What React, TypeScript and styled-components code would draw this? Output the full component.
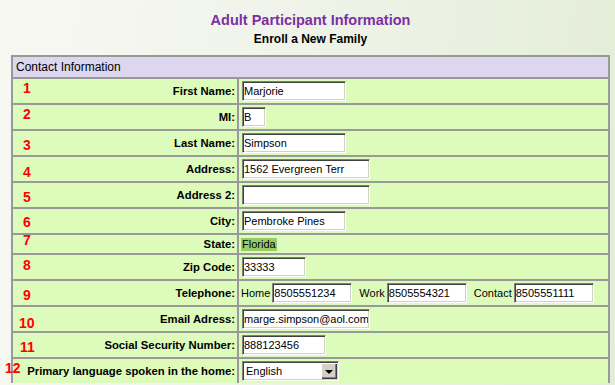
import React from 'react';
import styled, { createGlobalStyle } from 'styled-components';

const GlobalStyle = createGlobalStyle`
  html, body {
    margin: 0;
    padding: 0;
  }
  body {
    width: 615px;
    height: 385px;
    overflow: hidden;
    background: linear-gradient(100deg, #f8f8f3 0%, #f0f4ea 40%, #e3edd6 100%);
    font-family: "Liberation Sans", Arial, sans-serif;
  }
`;

const Page = styled.div`
  width: 599px;
  margin-left: 11px;
  padding-top: 11px;
`;

const Heading = styled.div`
  display: flex;
  flex-direction: column;
  align-items: center;
  margin-bottom: 9px;
`;

const Title = styled.div`
  font-size: 14.5px;
  line-height: 18px;
  font-weight: bold;
  color: #7b2fa5;
`;

const Subtitle = styled.div`
  margin-top: 3px;
  font-size: 12px;
  line-height: 14px;
  font-weight: bold;
  color: #000;
`;

const Table = styled.div`
  border: 2px solid #999;
  border-bottom: none;
`;

const HeaderRow = styled.div`
  height: 20px;
  line-height: 20px;
  padding-left: 3px;
  background: #dcd6ee;
  font-size: 12px;
  color: #000;
`;

const Row = styled.div<{ $h: number }>`
  position: relative;
  display: grid;
  grid-template-columns: 226px 1fr;
  height: ${(p) => p.$h}px;
  border-top: 2px solid #999;
  background: #ddfbbb;
`;

const LabelCell = styled.div`
  display: flex;
  align-items: center;
  justify-content: flex-end;
  padding-right: 2px;
  border-right: 2px solid #999;
  font-size: 11.3px;
  font-weight: bold;
  color: #000;
  white-space: nowrap;
`;

const ValueCell = styled.div`
  display: flex;
  align-items: center;
  padding-left: 2px;
  font-size: 11px;
  color: #000;
`;

const Num = styled.span<{ $top: number; $left: number }>`
  position: absolute;
  top: ${(p) => p.$top}px;
  left: ${(p) => p.$left}px;
  font-size: 14px;
  line-height: 14px;
  font-weight: bold;
  color: #f00;
`;

const TextInput = styled.input<{ $w: number }>`
  box-sizing: border-box;
  width: ${(p) => p.$w}px;
  height: 20px;
  margin: 0 0 0 1px;
  padding: 0 1px;
  border: 1px solid;
  border-color: #808080 #fff #fff #808080;
  box-shadow: inset 1px 1px 0 #404040, inset -1px -1px 0 #d4d0c8;
  background: #fff;
  font-family: "Liberation Sans", Arial, sans-serif;
  font-size: 11px;
  color: #000;
  outline: none;
`;

const InlineLabel = styled.span<{ $gap: number }>`
  margin-left: ${(p) => p.$gap}px;
  margin-right: 1px;
  font-size: 11px;
`;

const StateValue = styled.span`
  padding: 0 1px;
  line-height: 13px;
  background: #99cc66;
  font-size: 11px;
`;

const SelectBox = styled.div`
  box-sizing: border-box;
  display: flex;
  align-items: center;
  width: 97px;
  height: 20px;
  margin-left: 1px;
  border: 1px solid;
  border-color: #808080 #fff #fff #808080;
  box-shadow: inset 1px 1px 0 #404040, inset -1px -1px 0 #d4d0c8;
  background: #fff;
`;

const NativeSelect = styled.select`
  flex: 1;
  min-width: 0;
  height: 16px;
  margin: 0 0 0 1px;
  padding: 0 0 0 2px;
  border: none;
  appearance: none;
  background: transparent;
  font-family: "Liberation Sans", Arial, sans-serif;
  font-size: 11px;
  color: #000;
  outline: none;
`;

const ArrowButton = styled.span`
  display: flex;
  align-items: center;
  justify-content: center;
  width: 16px;
  height: 16px;
  margin-right: 1px;
  background: #d4d0c8;
  box-shadow: inset 1px 1px 0 #fff, inset -1px -1px 0 #404040, inset -2px -2px 0 #808080;

  &::after {
    content: '';
    width: 0;
    height: 0;
    margin-top: 1px;
    border-left: 4px solid transparent;
    border-right: 4px solid transparent;
    border-top: 4px solid #000;
  }
`;

type Field = {
  n: string;
  label: string;
  top: number;
  left: number;
  h?: number;
  value: React.ReactNode;
};

const fields: Field[] = [
  { n: '1', label: 'First Name:', top: 2, left: 10, value: <TextInput $w={104} defaultValue="Marjorie" /> },
  { n: '2', label: 'MI:', top: 2, left: 10, value: <TextInput $w={24} defaultValue="B" /> },
  { n: '3', label: 'Last Name:', top: 7, left: 10, value: <TextInput $w={104} defaultValue="Simpson" /> },
  { n: '4', label: 'Address:', top: 8, left: 10, value: <TextInput $w={128} defaultValue="1562 Evergreen Terr" /> },
  { n: '5', label: 'Address 2:', top: 7, left: 10, value: <TextInput $w={128} defaultValue="" /> },
  { n: '6', label: 'City:', top: 6, left: 10, value: <TextInput $w={104} defaultValue="Pembroke Pines" /> },
  { n: '7', label: 'State:', top: -2, left: 10, h: 18, value: <StateValue>Florida</StateValue> },
  { n: '8', label: 'Zip Code:', top: 3, left: 10, value: <TextInput $w={64} defaultValue="33333" /> },
  {
    n: '9',
    label: 'Telephone:',
    top: 7,
    left: 10,
    value: (
      <>
        <InlineLabel $gap={0}>Home</InlineLabel>
        <TextInput $w={80} defaultValue="8505551234" />
        <InlineLabel $gap={7}>Work</InlineLabel>
        <TextInput $w={80} defaultValue="8505554321" />
        <InlineLabel $gap={7}>Contact</InlineLabel>
        <TextInput $w={80} defaultValue="8505551111" />
      </>
    ),
  },
  { n: '10', label: 'Email Adress:', top: 9, left: 6, value: <TextInput $w={128} defaultValue="marge.simpson@aol.com" /> },
  { n: '11', label: 'Social Security Number:', top: 7, left: 7, value: <TextInput $w={84} defaultValue="888123456" /> },
  {
    n: '12',
    label: 'Primary language spoken in the home:',
    top: 2,
    left: -8,
    value: (
      <SelectBox>
        <NativeSelect defaultValue="English">
          <option>English</option>
          <option>Spanish</option>
        </NativeSelect>
        <ArrowButton />
      </SelectBox>
    ),
  },
];

export default function App() {
  return (
    <>
      <GlobalStyle />
      <Page>
        <Heading>
          <Title>Adult Participant Information</Title>
          <Subtitle>Enroll a New Family</Subtitle>
        </Heading>
        <Table>
          <HeaderRow>Contact Information</HeaderRow>
          {fields.map((f) => (
            <Row key={f.n} $h={f.h ?? 24}>
              <LabelCell>{f.label}</LabelCell>
              <ValueCell>{f.value}</ValueCell>
              <Num $top={f.top} $left={f.left}>
                {f.n}
              </Num>
            </Row>
          ))}
        </Table>
      </Page>
    </>
  );
}
